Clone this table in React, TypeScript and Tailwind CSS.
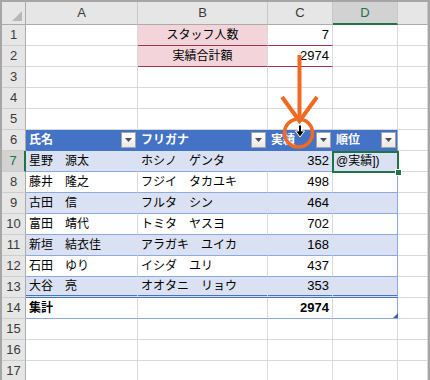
import React from "react";

const BASE = "flex items-center overflow-hidden whitespace-nowrap border-r border-b";
const G = "border-r-[#d9d9d9] border-b-[#d9d9d9] bg-white";
const ROWH = "justify-center bg-[#e6e6e6] text-[#3a3a3a] border-r-[#ababab] border-b-[#cdcdcd] text-[13px]";
const ROWH_SEL = "justify-center bg-[#d2d2d2] text-[#217346] border-r-2 border-r-[#217346] border-b-[#cdcdcd] text-[13px]";
const COLH = "justify-center bg-[#e6e6e6] text-[#3a3a3a] border-r-[#c8c8c8] border-b-[#ababab] text-[13px]";
const COLH_SEL = "justify-center bg-[#d2d2d2] text-[#217346] border-r-[#c8c8c8] border-b-2 border-b-[#217346] text-[13px]";

const PINK = "justify-center bg-[#f2d4da] border-r-[#d9d9d9] border-b-[#a8344e]";
const PINKVAL = "justify-end pr-[3px] bg-white border-r-[#d9d9d9] border-b-[#a8344e] text-[13px]";

const TH = "bg-[#4472c4] border-r-[#4472c4] border-b-[#4472c4] text-white font-bold justify-between pl-[3px] pr-[1px]";
const TH_D = "bg-[#4472c4] border-r-[#8ea9db] border-b-[#4472c4] text-white font-bold justify-between pl-[3px] pr-[1px]";

const BAND = "bg-[#d9e1f2] border-r-[#d9e1f2] border-b-[#8ea9db]";
const BAND_D = "bg-[#d9e1f2] border-r-[#8ea9db] border-b-[#8ea9db]";
const WHITE = "bg-white border-r-[#d9d9d9] border-b-[#8ea9db]";
const WHITE_D = "bg-white border-r-[#8ea9db] border-b-[#8ea9db]";
const BAND_LAST = "bg-[#d9e1f2] border-r-[#d9e1f2] border-b-[3px] border-double border-b-[#4472c4]";
const BAND_LAST_D = "bg-[#d9e1f2] border-r-[#8ea9db] border-b-[3px] border-double border-b-[#4472c4]";
const TOTAL = "bg-white border-r-[#d9d9d9] border-b-[#8ea9db]";
const TOTAL_D = "bg-white border-r-[#8ea9db] border-b-[#8ea9db]";

function C({ cls, children }: { cls: string; children?: React.ReactNode }) {
  return <div className={`${BASE} ${cls}`}>{children}</div>;
}

function Drop() {
  return (
    <div className="flex h-[16px] w-[15px] shrink-0 items-center justify-center border border-[#a3a3a3] bg-gradient-to-b from-[#ffffff] to-[#e9e9e9]">
      <svg width="7" height="4" viewBox="0 0 7 4">
        <polygon points="0,0 7,0 3.5,4" fill="#505050" />
      </svg>
    </div>
  );
}

const data = [
  ["星野　源太", "ホシノ　ゲンタ", "352"],
  ["藤井　隆之", "フジイ　タカユキ", "498"],
  ["古田　信", "フルタ　シン", "464"],
  ["富田　靖代", "トミタ　ヤスヨ", "702"],
  ["新垣　結衣佳", "アラガキ　ユイカ", "168"],
  ["石田　ゆり", "イシダ　ユリ", "437"],
  ["大谷　亮", "オオタニ　リョウ", "353"],
];

function Empty({ n }: { n: number }) {
  return (
    <>
      <C cls={ROWH}>{n}</C>
      <C cls={G} />
      <C cls={G} />
      <C cls={G} />
      <C cls={G} />
      <C cls={G} />
    </>
  );
}

export default function App() {
  return (
    <div className="relative h-[380px] w-[430px] overflow-hidden bg-white font-['Liberation_Sans','Noto_Sans_CJK_JP',sans-serif] text-[12px] text-black">
      <div className="h-[382px] border-l-2 border-r-2 border-t-2 border-[#a6a6a6]">
        <div className="grid grid-cols-[24px_112px_130px_65px_65px_30px] grid-rows-[23px_repeat(17,21px)]">
          {/* column headers */}
          <C cls="relative bg-[#e6e6e6] border-r-[#ababab] border-b-[#ababab]">
            <svg className="absolute left-0 top-0" width="23" height="22" viewBox="0 0 23 22">
              <polygon points="10,19 20,9 20,19" fill="#b7b7b7" />
            </svg>
          </C>
          <C cls={COLH}>A</C>
          <C cls={COLH}>B</C>
          <C cls={COLH}>C</C>
          <C cls={COLH_SEL}>D</C>
          <C cls={COLH} />

          {/* row 1 */}
          <C cls={ROWH}>1</C>
          <C cls={G} />
          <C cls={PINK}>スタッフ人数</C>
          <C cls={PINKVAL}>7</C>
          <C cls={G} />
          <C cls={G} />
          {/* row 2 */}
          <C cls={ROWH}>2</C>
          <C cls={G} />
          <C cls={PINK}>実績合計額</C>
          <C cls={PINKVAL}>2974</C>
          <C cls={G} />
          <C cls={G} />

          <Empty n={3} />
          <Empty n={4} />
          <Empty n={5} />

          {/* row 6 table header */}
          <C cls={ROWH}>6</C>
          <C cls={TH}>
            <span>氏名</span>
            <Drop />
          </C>
          <C cls={TH}>
            <span>フリガナ</span>
            <Drop />
          </C>
          <C cls={TH}>
            <span>実績</span>
            <Drop />
          </C>
          <C cls={TH_D}>
            <span>順位</span>
            <Drop />
          </C>
          <C cls={G} />

          {data.map((r, i) => {
            const last = i === data.length - 1;
            const band = i % 2 === 0;
            const cls = last ? BAND_LAST : band ? BAND : WHITE;
            const clsD = last ? BAND_LAST_D : band ? BAND_D : WHITE_D;
            return (
              <React.Fragment key={i}>
                <C cls={i === 0 ? ROWH_SEL : ROWH}>{i + 7}</C>
                <C cls={`${cls} pl-[3px]`}>{r[0]}</C>
                <C cls={`${cls} pl-[3px]`}>{r[1]}</C>
                <C cls={`${cls} justify-end pr-[3px] text-[13px]`}>{r[2]}</C>
                <C cls={`${clsD} pl-[3px]`}>{i === 0 ? "@実績])" : null}</C>
                <C cls={G} />
              </React.Fragment>
            );
          })}

          {/* row 14 total */}
          <C cls={ROWH}>14</C>
          <C cls={`${TOTAL} pl-[3px] font-bold`}>集計</C>
          <C cls={TOTAL} />
          <C cls={`${TOTAL} justify-end pr-[3px] font-bold text-[13px]`}>2974</C>
          <C cls={TOTAL_D} />
          <C cls={G} />

          <Empty n={15} />
          <Empty n={16} />
          <Empty n={17} />
        </div>
      </div>

      {/* active cell */}
      <div className="absolute left-[332px] top-[151px] h-[22px] w-[67px] border-2 border-[#217346]" />
      <div className="absolute left-[395px] top-[169px] h-[7px] w-[7px] border border-white bg-[#217346]" />

      {/* table resize handle */}
      <svg className="absolute left-[393px] top-[313px]" width="5" height="5" viewBox="0 0 5 5">
        <polygon points="0,5 5,0 5,5" fill="#4060b0" />
      </svg>

      {/* orange arrow + circle */}
      <svg className="pointer-events-none absolute left-0 top-0" width="430" height="380" viewBox="0 0 430 380">
        <line x1="299.5" y1="55" x2="299.5" y2="121" stroke="#f26a22" strokeWidth="4" />
        <polyline points="282,97 299.5,121 317,97" fill="none" stroke="#f26a22" strokeWidth="4" />
        <circle cx="298.5" cy="133" r="14" fill="none" stroke="#f26a22" strokeWidth="3.5" />
        <path d="M298.5,125 h3 v6 h3 l-4.5,6 l-4.5,-6 h3 z" fill="#000" stroke="#fff" strokeWidth="1" />
      </svg>
    </div>
  );
}
